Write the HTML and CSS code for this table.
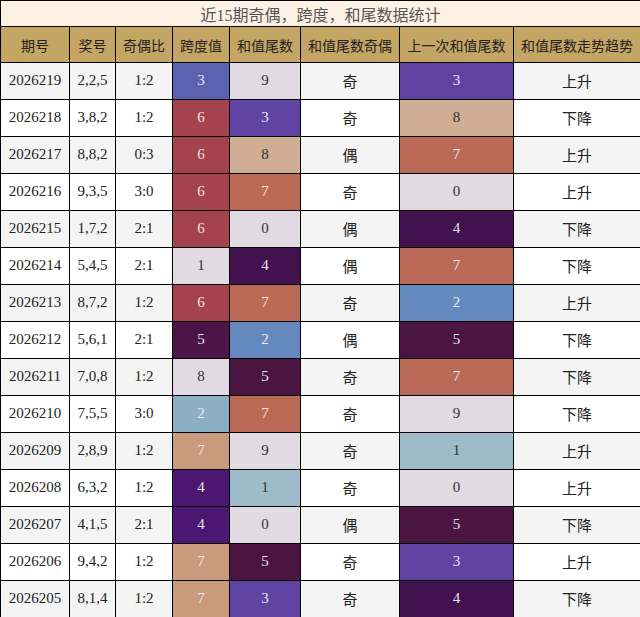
FILE: index.html
```html
<!DOCTYPE html>
<html lang="zh">
<head>
<meta charset="utf-8">
<title>近15期奇偶，跨度，和尾数据统计</title>
<link rel="stylesheet" href="styles.css">
</head>
<body>
<table class="stats">
  <colgroup>
    <col class="c1"><col class="c2"><col class="c3"><col class="c4"><col class="c5"><col class="c6"><col class="c7"><col class="c8">
  </colgroup>
  <thead>
    <tr class="title-row"><th colspan="8" class="title">近15期奇偶，跨度，和尾数据统计</th></tr>
    <tr class="head-row">
      <th>期号</th><th>奖号</th><th>奇偶比</th><th>跨度值</th><th>和值尾数</th><th>和值尾数奇偶</th><th>上一次和值尾数</th><th>和值尾数走势趋势</th>
    </tr>
  </thead>
  <tbody>
    <tr><td>2026219</td><td>2,2,5</td><td>1:2</td><td class="s3">3</td><td class="t9">9</td><td class="cn">奇</td><td class="t3">3</td><td class="cn">上升</td></tr>
    <tr><td>2026218</td><td>3,8,2</td><td>1:2</td><td class="s6">6</td><td class="t3">3</td><td class="cn">奇</td><td class="t8">8</td><td class="cn">下降</td></tr>
    <tr><td>2026217</td><td>8,8,2</td><td>0:3</td><td class="s6">6</td><td class="t8">8</td><td class="cn">偶</td><td class="t7">7</td><td class="cn">上升</td></tr>
    <tr><td>2026216</td><td>9,3,5</td><td>3:0</td><td class="s6">6</td><td class="t7">7</td><td class="cn">奇</td><td class="t0">0</td><td class="cn">上升</td></tr>
    <tr><td>2026215</td><td>1,7,2</td><td>2:1</td><td class="s6">6</td><td class="t0">0</td><td class="cn">偶</td><td class="t4">4</td><td class="cn">下降</td></tr>
    <tr><td>2026214</td><td>5,4,5</td><td>2:1</td><td class="s1">1</td><td class="t4">4</td><td class="cn">偶</td><td class="t7">7</td><td class="cn">下降</td></tr>
    <tr><td>2026213</td><td>8,7,2</td><td>1:2</td><td class="s6">6</td><td class="t7">7</td><td class="cn">奇</td><td class="t2">2</td><td class="cn">上升</td></tr>
    <tr><td>2026212</td><td>5,6,1</td><td>2:1</td><td class="s5">5</td><td class="t2">2</td><td class="cn">偶</td><td class="t5">5</td><td class="cn">下降</td></tr>
    <tr><td>2026211</td><td>7,0,8</td><td>1:2</td><td class="s8">8</td><td class="t5">5</td><td class="cn">奇</td><td class="t7">7</td><td class="cn">下降</td></tr>
    <tr><td>2026210</td><td>7,5,5</td><td>3:0</td><td class="s2">2</td><td class="t7">7</td><td class="cn">奇</td><td class="t9">9</td><td class="cn">下降</td></tr>
    <tr><td>2026209</td><td>2,8,9</td><td>1:2</td><td class="s7">7</td><td class="t9">9</td><td class="cn">奇</td><td class="t1">1</td><td class="cn">上升</td></tr>
    <tr><td>2026208</td><td>6,3,2</td><td>1:2</td><td class="s4">4</td><td class="t1">1</td><td class="cn">奇</td><td class="t0">0</td><td class="cn">上升</td></tr>
    <tr><td>2026207</td><td>4,1,5</td><td>2:1</td><td class="s4">4</td><td class="t0">0</td><td class="cn">偶</td><td class="t5">5</td><td class="cn">下降</td></tr>
    <tr><td>2026206</td><td>9,4,2</td><td>1:2</td><td class="s7">7</td><td class="t5">5</td><td class="cn">奇</td><td class="t3">3</td><td class="cn">上升</td></tr>
    <tr><td>2026205</td><td>8,1,4</td><td>1:2</td><td class="s7">7</td><td class="t3">3</td><td class="cn">奇</td><td class="t4">4</td><td class="cn">下降</td></tr>
  </tbody>
</table>
</body>
</html>
```
FILE: styles.css
```css
html, body {
  margin: 0;
  padding: 0;
  background: #ffffff;
}

.stats {
  width: 640px;
  border-collapse: collapse;
  table-layout: fixed;
  font-family: "Liberation Serif", "Noto Sans CJK SC", serif;
  font-size: 15px;
  color: #222222;
}

.c1 { width: 69px; }
.c2 { width: 46px; }
.c3 { width: 57px; }
.c4 { width: 57px; }
.c5 { width: 71px; }
.c6 { width: 99px; }
.c7 { width: 114px; }
.c8 { width: 127px; }

.stats th,
.stats td {
  border: 1px solid #000000;
  padding: 0;
  text-align: center;
  vertical-align: middle;
  overflow: hidden;
  white-space: nowrap;
}

.title-row { height: 26px; }
.title {
  background: #fdf1e4;
  color: #555555;
  font-weight: normal;
  font-size: 16px;
}

.head-row { height: 36px; }
.head-row th {
  background: #c5a563;
  color: #222222;
  font-weight: normal;
  font-size: 14px;
  font-family: "Noto Sans CJK SC", sans-serif;
}

.stats tbody tr { height: 36.98px; }
.stats tbody tr:nth-child(odd) td { background: #f4f4f4; }
.stats tbody tr:nth-child(even) td { background: #ffffff; }

.stats td.cn {
  font-family: "Noto Sans CJK SC", sans-serif;
  font-size: 15px;
}

/* span value colours */
.stats tbody tr td.s1 { background: #e2dae2; color: #333333; }
.stats tbody tr td.s2 { background: #8bafc5; color: #f0eaf0; }
.stats tbody tr td.s3 { background: #5c62b1; color: #e8e2f0; }
.stats tbody tr td.s4 { background: #4b1770; color: #e8e2f0; }
.stats tbody tr td.s5 { background: #4a1645; color: #e8e2f0; }
.stats tbody tr td.s6 { background: #a4424f; color: #f0e4e8; }
.stats tbody tr td.s7 { background: #c99a7e; color: #f4ece8; }
.stats tbody tr td.s8 { background: #e2dae2; color: #333333; }

/* tail value colours */
.stats tbody tr td.t0 { background: #e2dae2; color: #333333; }
.stats tbody tr td.t1 { background: #9dbbc8; color: #333333; }
.stats tbody tr td.t2 { background: #6588bf; color: #f0eaf4; }
.stats tbody tr td.t3 { background: #5f44a3; color: #e8e2f0; }
.stats tbody tr td.t4 { background: #42124f; color: #e8e2f0; }
.stats tbody tr td.t5 { background: #4a1540; color: #e8e2f0; }
.stats tbody tr td.t7 { background: #bb6957; color: #f4e8e4; }
.stats tbody tr td.t8 { background: #d0ae96; color: #333333; }
.stats tbody tr td.t9 { background: #e2dae2; color: #333333; }
```
